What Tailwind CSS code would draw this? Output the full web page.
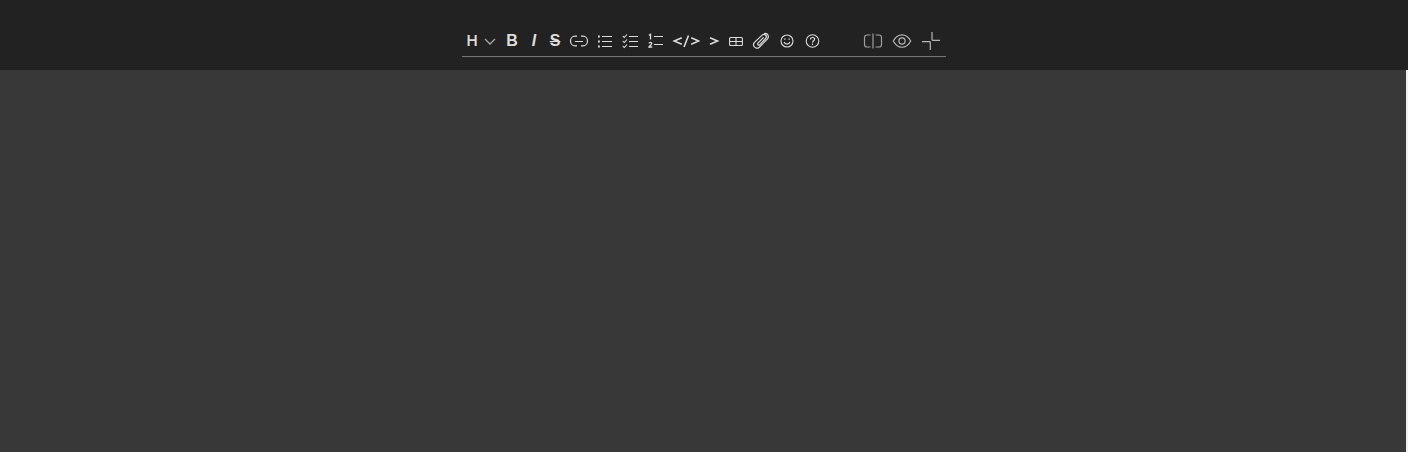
<!DOCTYPE html>
<html lang="en">
<head>
<meta charset="utf-8">
<meta name="viewport" content="width=device-width, initial-scale=1">
<title>Markdown editor</title>
<script src="https://cdn.jsdelivr.net/npm/@tailwindcss/browser@4"></script>
</head>
<body class="flex min-h-screen flex-col bg-[#222222] font-['Liberation_Sans',sans-serif] text-[#dcdddb]">
<header class="flex justify-center pt-7 pb-[13px]">
  <div role="toolbar" aria-label="Formatting" class="flex w-full max-w-[484px] items-center justify-between border-b border-[#777777] pr-[5px] pb-0.5 pl-0.5">
    <div class="flex h-[26px] items-center gap-1 font-bold leading-none [&_button]:flex [&_button]:shrink-0 [&_button]:items-center [&_button]:justify-center [&_svg]:shrink-0">
      <button aria-label="Heading" class="w-[34px] gap-0.5"><span class="w-4 font-['Inter'] text-[15px] leading-4 font-semibold">H</span>
        <svg class="size-4" viewBox="0 0 16 16" fill="none" stroke="#a6a6a6" stroke-width="1.3"><path d="M3 6l5 5 5-5"/></svg></button>
      <button aria-label="Bold" class="w-5 text-base leading-4">B</button>
      <button aria-label="Italic" class="w-4 text-base leading-4 italic">I</button>
      <button aria-label="Strikethrough" class="w-[18px] text-base leading-4 line-through decoration-1">S</button>
      <button aria-label="Link" class="w-[22px]"><svg width="20" height="14" viewBox="0 0 20 14" fill="none" stroke="currentColor" stroke-width="1.2"><path d="M8 2.200H6a4.500 4.800 0 000 9.600h2M12 2.200h2a4.500 4.800 0 010 9.600h-2M6 7.500h8"/></svg></button>
      <button aria-label="Bullet list" class="w-[22px]"><svg width="16" height="16" viewBox="0 0 16 16" fill="none" stroke="currentColor"><path stroke-width="1.1" d="M5 3.5h10M5 8.5h10M5 13.5h10"/><path stroke-width="1.800" d="M1 3.5h1.800M1 8.5h1.800M1 13.5h1.800"/></svg></button>
      <button aria-label="Task list" class="w-5"><svg width="16" height="16" viewBox="0 0 16 16" fill="none" stroke="currentColor" stroke-width="1.1"><path d="M7 3.5h9M7 8.5h9M7 13.5h9M.8 3.2l1.500 1.300L5 1.500M.8 8.2l1.500 1.300L5 6.500M.8 13.200l1.500 1.300L5 11.500"/></svg></button>
      <button aria-label="Numbered list" class="w-6"><svg width="16" height="16" viewBox="0 0 16 16" fill="none" stroke="currentColor" stroke-width="1.1"><path d="M6 3.5h9M6 11.500h9"/><path stroke-width="1.300" d="M.8 2.300L2.500 1.300V6.500M1 10.300c.2-1.300 2.800-1.300 2.800.2 0 1.100-2.300 2.200-2.800 3.500h3.200"/></svg></button>
      <button aria-label="Code" class="w-7"><svg width="28" height="16" viewBox="0 0 28 16" fill="none" stroke="currentColor" stroke-width="1.600"><path d="M9.800 4.800L2.300 8l7.500 3.200M19.200 4.800L26.700 8l-7.500 3.200M16.500 2.500l-4.500 11.500"/></svg></button>
      <button aria-label="Quote" class="w-5"><svg width="12" height="16" viewBox="0 0 12 16" fill="none" stroke="currentColor" stroke-width="1.600"><path d="M2 4.800L9.500 8 2 11.200"/></svg></button>
      <button aria-label="Table" class="w-4"><svg width="14" height="16" viewBox="0 0 14 16" fill="none" stroke="currentColor" stroke-width="1.100"><rect x=".6" y="4.500" width="12.800" height="8" rx="1"/><path d="M.5 8.500h13M7 4.500v8"/></svg></button>
      <button aria-label="Attach file" class="w-[26px]"><svg width="18" height="18" viewBox="0 0 18 18" fill="none" stroke="currentColor" stroke-width="1.200" stroke-linecap="round"><path d="M11.300 5.700L6 11.200a1.100 1.100 0 001.600 1.600l6-6.300a2.400 2.400 0 00-3.500-3.400L2.500 10.400a3.400 3.400 0 004.800 4.800l8-8a4 4 0 00.2-4.900 4.200 4.200 0 00-3.200-.8"/></svg></button>
      <button aria-label="Emoji" class="w-[18px]"><svg width="16" height="16" viewBox="0 0 16 16" fill="none" stroke="currentColor"><circle cx="8" cy="8" r="6" stroke-width="1.100"/><path stroke-width="1.100" d="M5 9a3.200 3.200 0 006 0"/><path stroke-width="1.200" d="M5.200 6.200h1.300M9.500 6.200h1.300"/></svg></button>
      <button aria-label="Help" class="w-[25px]"><svg width="15" height="16" viewBox="0 0 15 16" fill="none" stroke="currentColor" stroke-width="1.100"><circle cx="7.500" cy="8" r="6.300"/><path stroke-width="1.200" d="M5.500 6.400c0-2.600 4.100-2.500 4.100-.1 0 1.400-2.100 1.400-2.100 3.200M7.500 10.600v1.300"/></svg></button>
    </div>
    <div class="flex h-[26px] items-center gap-[9px] text-[#b6b6b6]">
      <button aria-label="Split view"><svg width="20" height="16" viewBox="0 0 20 16" fill="none" stroke="#a0a0a0"><path d="M7.500 2H4A2.500 2.500 0 001.500 4.500v7A2.500 2.500 0 004 14h3.500M12.500 2H16a2.500 2.500 0 012.500 2.500v7A2.500 2.500 0 0116 14h-3.500M10 .5v15" stroke-width="1.200"/></svg></button>
      <button aria-label="Preview"><svg width="20" height="16" viewBox="0 0 20 16" fill="none" stroke="currentColor" stroke-width="1.200"><path d="M1.300 8c4.300-8.300 13.100-8.300 17.400 0-4.300 8.300-13.100 8.300-17.400 0z"/><circle cx="10" cy="8" r="3.100"/></svg></button>
      <button aria-label="Exit full screen"><svg width="20" height="20" viewBox="0 0 20 20" fill="none" stroke="currentColor" stroke-width="1.200"><path d="M11 1v7.500q0 .8.800.8H19M1 10.700h7.500q.8 0 .8.800V19"/></svg></button>
    </div>
  </div>
</header>
<main class="flex flex-1 border-r-2 border-[#f0f0f0] bg-[#383838]">
  <textarea aria-label="Document" class="block w-full resize-none border-b-2 border-[#3c373a] outline-none"></textarea>
</main>
</body>
</html>
